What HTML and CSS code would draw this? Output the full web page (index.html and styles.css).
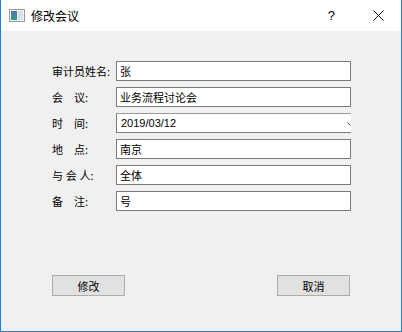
FILE: index.html
```html
<!DOCTYPE html>
<html lang="zh-CN">

<head>
    <meta charset="UTF-8">
    <title>修改会议</title>
    <link rel="stylesheet" href="styles.css">
</head>

<body>
    <div class="window">
        <div class="titlebar">
            <svg class="app-icon" width="16" height="13" viewBox="0 0 16 13">
                <rect x="0.5" y="0.5" width="15" height="12" fill="#f4f4f4" stroke="#9a9a9a" />
                <rect x="2" y="2" width="6" height="9" fill="#3f8f8a" />
                <rect x="2" y="2" width="6" height="3" fill="#4c79b8" />
                <rect x="9" y="2" width="5" height="9" fill="#d8e2e2" />
            </svg>
            <span class="title">修改会议</span>
            <span class="help">?</span>
            <svg class="close" width="11" height="11" viewBox="0 0 11 11">
                <path d="M0.5 0.5 L10.5 10.5 M10.5 0.5 L0.5 10.5" stroke="#111" stroke-width="1" fill="none" />
            </svg>
        </div>

        <div class="content">
            <div class="form">
                <label>审计员姓名:</label>
                <div class="field">张</div>

                <label>会&emsp;议:</label>
                <div class="field">业务流程讨论会</div>

                <label>时&emsp;间:</label>
                <div class="field combo">
                    <span>2019/03/12</span>
                    <svg class="arrow" width="4" height="4" viewBox="0 0 4 4">
                        <path d="M0.5 0.5 L3.5 3.5" stroke="#444" stroke-width="1" fill="none" />
                    </svg>
                </div>

                <label>地&emsp;点:</label>
                <div class="field">南京</div>

                <label>与&#8197;会&#8197;人:</label>
                <div class="field">全体</div>

                <label>备&emsp;注:</label>
                <div class="field">号</div>
            </div>

            <div class="buttons">
                <button>修改</button>
                <button>取消</button>
            </div>
        </div>
    </div>
</body>

</html>
```

FILE: styles.css
```css
:root {
    --frame-color: #1883d7;
    --panel-color: #f0f0f0;
    --field-border: #7a7a7a;
}

body {
    margin: 0;
    font-family: 'Liberation Sans', 'Noto Sans CJK SC', sans-serif;
    font-size: 11px;
    color: #000;
}

.window {
    width: 402px;
    height: 332px;
    box-sizing: border-box;
    border: 1px solid var(--frame-color);
    border-top: none;
    background-color: var(--panel-color);
    display: flex;
    flex-direction: column;
}

.titlebar {
    height: 31px;
    background-color: white;
    display: flex;
    align-items: center;
    padding-left: 8px;
}

.app-icon {
    margin-top: -1px;
}

.title {
    margin-left: 6px;
    font-family: 'Noto Sans CJK SC', sans-serif;
    font-size: 12px;
    flex: 1;
}

.help {
    font-family: 'Liberation Sans', sans-serif;
    font-size: 13px;
    margin-right: 38px;
}

.close {
    margin-right: 17px;
}

.content {
    flex: 1;
    padding: 30px 0 0 51px;
}

.form {
    display: grid;
    grid-template-columns: 64px 235px;
    grid-auto-rows: 20px;
    row-gap: 6px;
    align-items: center;
}

.form label {
    font-family: 'Noto Sans CJK SC', sans-serif;
    white-space: nowrap;
}

.field {
    height: 20px;
    box-sizing: border-box;
    background-color: white;
    border: 1px solid var(--field-border);
    padding: 0 3px;
    display: flex;
    align-items: center;
    white-space: nowrap;
}

.combo {
    border-right: none;
    border-top-color: #9a9a9a;
    padding-left: 4px;
    justify-content: space-between;
    padding-right: 0;
}

.arrow {
    margin-top: 1px;
}

.buttons {
    margin-top: 64px;
    display: flex;
    justify-content: space-between;
    width: 298px;
}

.buttons button {
    width: 73px;
    height: 21px;
    background-color: #e1e1e1;
    border: 1px solid #adadad;
    font-family: 'Noto Sans CJK SC', sans-serif;
    font-size: 11px;
    padding: 0;
    color: #000;
}
```
